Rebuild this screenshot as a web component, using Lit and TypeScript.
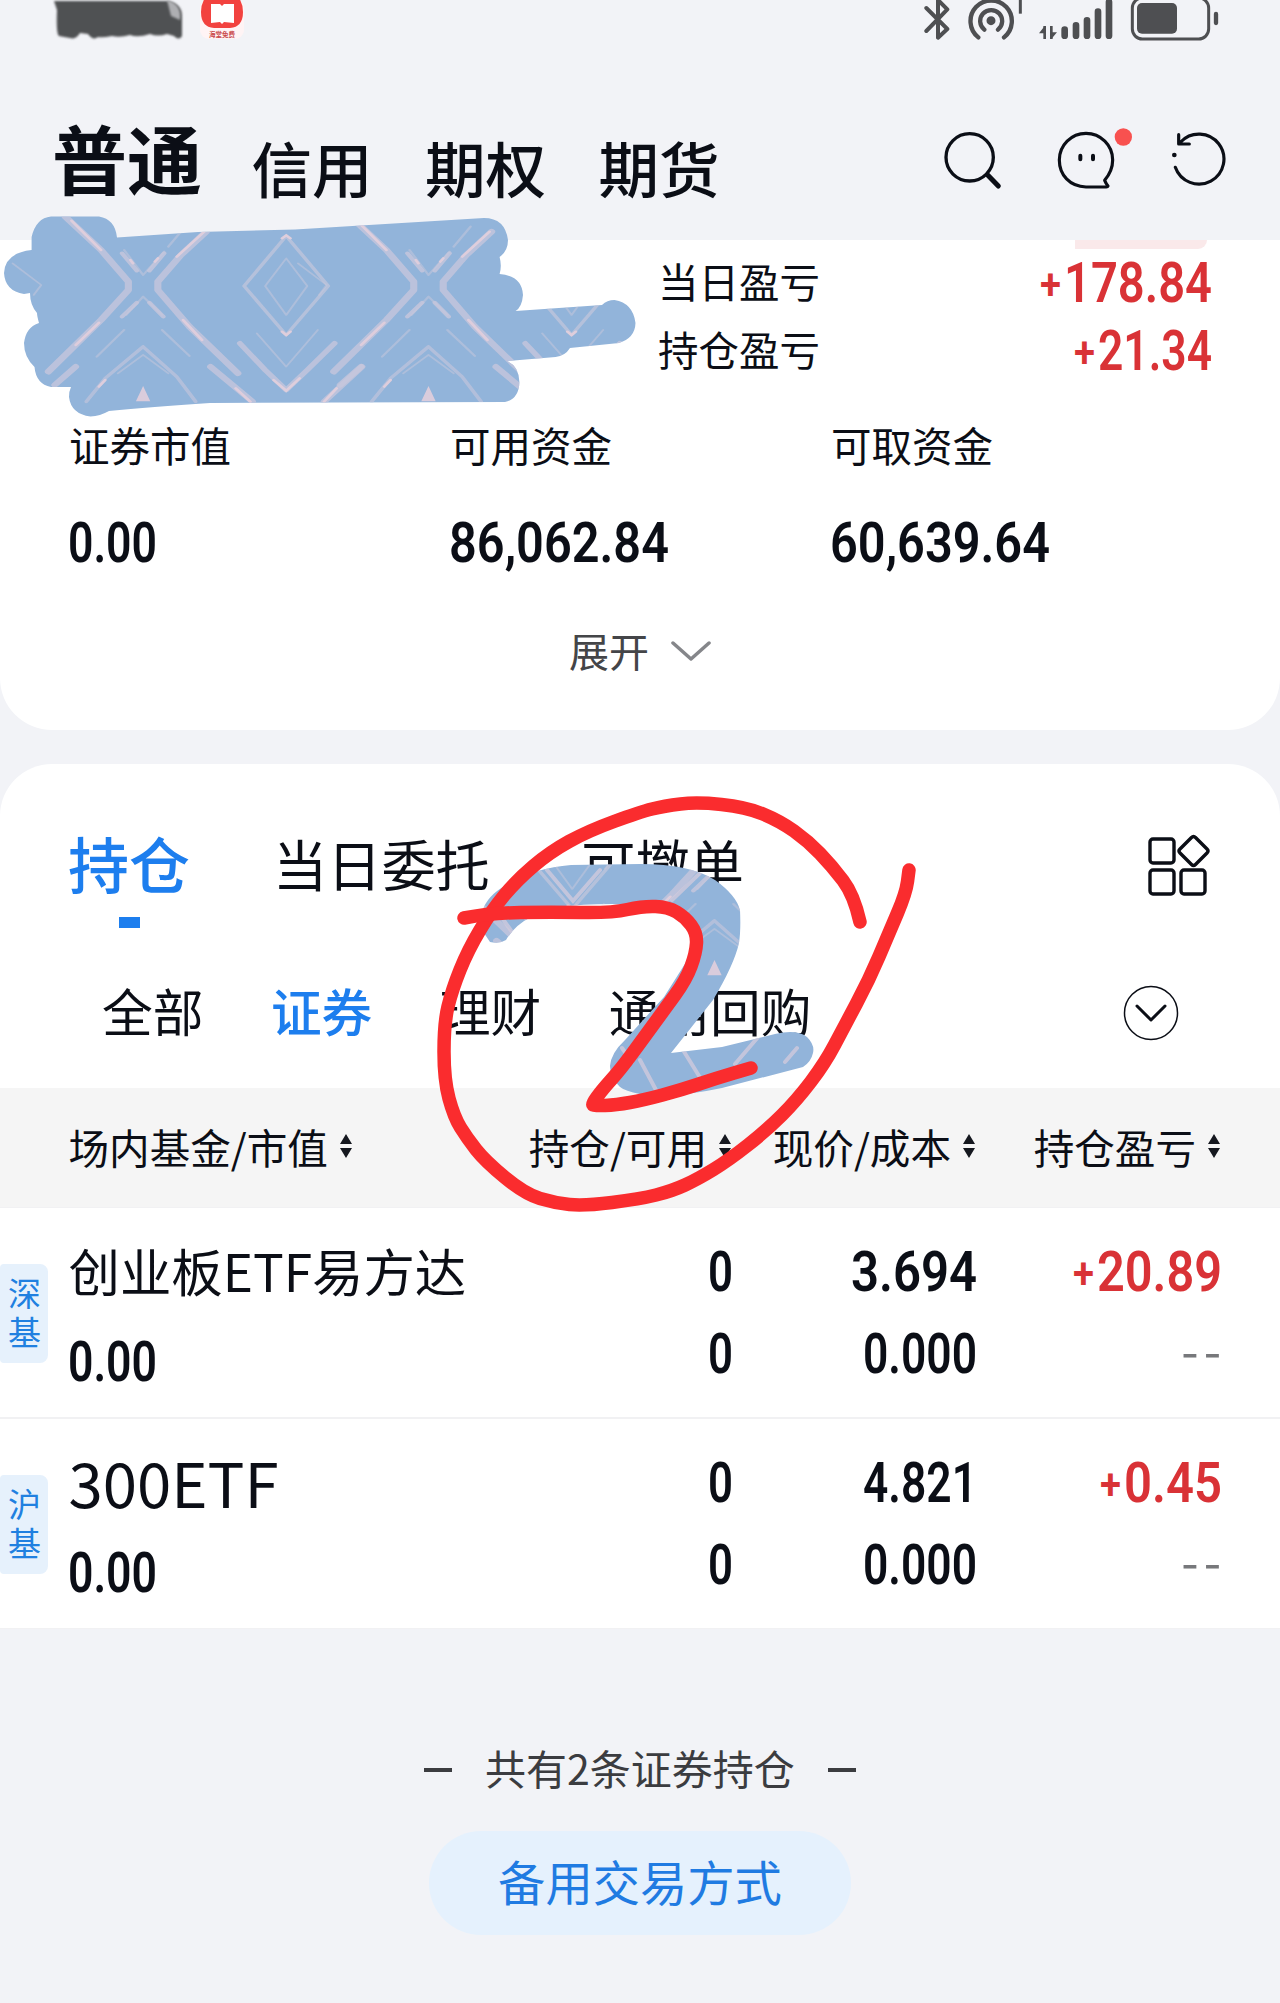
import { LitElement, html, css, svg } from "lit";
import { customElement, property } from "lit/decorators.js";

const sans = css`"Noto Sans CJK SC", "Noto Sans", sans-serif`;

/** A figure set in condensed numerals: `span` is its drawn width in pixels. */
@customElement("money-figure")
class MoneyFigure extends LitElement {
  @property() value = "";
  @property({ type: Number }) span = 0;

  static styles = css`
    :host { display: block; height: 40px; color: #0b0e16; }
    .figure { display: block; overflow: visible; }
    .digits { font: 600 56px Roboto, sans-serif; fill: currentColor; }
    .sign { font: 600 43px Roboto, sans-serif; fill: currentColor; }
  `;

  render() {
    const signed = this.value.startsWith("+");
    const digits = signed ? this.value.slice(1) : this.value;
    const start = signed ? 23 : -1;
    return html`<svg class="figure" width=${this.span} height="40">
      ${signed ? svg`<text class="sign" x="-1" y="37" textLength="21" lengthAdjust="spacingAndGlyphs">+</text>` : null}
      <text class="digits" x=${start} y="40" textLength=${this.span + 2 - start} lengthAdjust="spacingAndGlyphs">${digits}</text>
    </svg>`;
  }
}

interface Holding {
  market: string;
  name: string;
  large: boolean;
  price: [string, number];
  profit: [string, number];
}

const holdings: Holding[] = [
  { market: "深基", name: "创业板ETF易方达", large: false, price: ["3.694", 123], profit: ["+20.89", 146] },
  { market: "沪基", name: "300ETF", large: true, price: ["4.821", 111], profit: ["+0.45", 119] },
];

const funds: [string, string, number][] = [
  ["证券市值", "0.00", 86],
  ["可用资金", "86,062.84", 217],
  ["可取资金", "60,639.64", 217],
];

const sortMark = html`<svg class="sort" width="12" height="24" viewBox="0 0 12 24"><path d="M6 0 12 10H0zM6 24 0 14H12z" fill="#15181f" /></svg>`;

/* One repeat of the marbled brush pattern. */
const motif = svg`
  <g fill="none" stroke="#c8c7dc" stroke-linecap="round" stroke-linejoin="round">
    <path stroke-width="17" opacity=".75" d="M155 50 240 150 305 245V270L240 360 115 515M490 95 430 165 375 245V270L450 380 565 520"/>
    <path stroke-width="11" opacity=".8" d="M290 160 325 212M390 160 355 212M325 308 290 350M355 308 388 350"/>
    <path stroke-width="6" opacity=".5" d="M295 150 340 225 390 155M300 345 340 290 385 345M400 140 440 80M385 390 450 468M295 390 230 470"/>
    <path stroke-width="9" opacity=".6" d="M205 605 250 535 340 440M465 605 420 530 340 440"/>
    <path stroke-width="5" opacity=".5" d="M280 520 340 465 400 520M30 190 98 255 80 285"/>
    <path stroke-width="16" opacity=".75" d="M500 500 600 605M860 500 770 605M180 500 130 555"/>
    <path stroke-width="9" opacity=".65" d="M680 108 780 258 680 405 580 258z"/>
    <path stroke-width="5" opacity=".5" d="M680 175 730 258 680 345 630 258zM610 400 680 500 755 390"/>
    <path stroke-width="14" opacity=".75" d="M570 430 630 510 680 570 730 510 795 430"/>
  </g>
  <g fill="none" stroke="#e3cfdc" stroke-width="7" stroke-linecap="round" opacity=".9">
    <path d="M170 62 240 150M485 95 420 170M235 368 180 435M435 360 480 420M560 565 595 605M800 565 770 605M250 540 235 560M670 395 680 405 690 395M670 115 680 106 690 115M650 540 680 572 712 535M375 175 368 185M310 180 316 190"/>
    <path fill="#e3cfdc" d="M340 568 328 600H352z"/>
  </g>`;

type Point = [number, number];

/* Turns pen samples into a smooth stroke that bends through their midpoints. */
function penPath(points: Point[]): string {
  let d = `M${points[0][0]} ${points[0][1]}`;
  for (let i = 1; i < points.length - 1; i++) {
    const [x, y] = points[i];
    const [nx, ny] = points[i + 1];
    d += `Q${x} ${y} ${(x + nx) / 2} ${(y + ny) / 2}`;
  }
  const last = points[points.length - 1];
  return `${d}L${last[0]} ${last[1]}`;
}

const loop: Point[] = [
  [860, 922], [854, 895], [832, 866], [808, 841], [780, 821], [746, 807], [697, 802], [664, 806], [640, 812], [588, 831],
  [550, 852], [517, 880], [492, 910], [468, 950], [452, 990], [444, 1023], [444, 1080], [454, 1117], [467, 1138], [485, 1161],
  [525, 1194], [555, 1203], [584, 1206], [640, 1199], [672, 1191], [698, 1179], [729, 1160], [767, 1130], [797, 1100],
  [825, 1063], [844, 1027], [869, 980], [889, 933], [906, 893], [909, 870],
];

const two: Point[] = [
  [464, 918], [490, 913], [551, 912], [612, 913], [643, 906], [668, 907], [685, 917], [697, 933], [696, 953], [686, 980],
  [664, 1010], [640, 1043], [620, 1070], [602, 1090], [592, 1104], [594, 1106], [616, 1105], [644, 1100], [681, 1090],
  [717, 1078], [751, 1068],
];

@customElement("app-root")
class AppRoot extends LitElement {
  static styles = css`
    :host { display: block; font-family: ${sans}; color: #0b0e16; }
    .page { position: relative; width: 1280px; height: 2003px; overflow: hidden; background: #f2f3f7; white-space: nowrap; }
    .page svg { display: block; flex: none; }

    .status { display: flex; height: 46px; justify-content: space-between; padding: 0 53px 0 50px; }
    .status-left { display: flex; gap: 14px; }
    .nav { display: flex; height: 194px; box-sizing: border-box; align-items: flex-start; padding-left: 52px; font-weight: 500; }
    .nav-tab { font-size: 60.5px; line-height: 70px; margin: 86px 52.5px 0 0; }
    .nav-tab.on { font-size: 75px; line-height: 80px; margin: 71px 49.5px 0 0; font-weight: 700; }
    .nav-icons { display: flex; margin: 80px 53px 0 auto; }
    .nav-icons .chat { margin: -1px 34px 0 52px; }

    .card { background: #fff; }
    .assets { height: 490px; border-radius: 0 0 52px 52px; display: flex; flex-direction: column; }
    .tag { align-self: flex-end; width: 132px; height: 9px; margin-right: 73px; background: #fae9ea; border-radius: 0 0 28px 0; }
    .pnl { display: flex; justify-content: space-between; align-items: center; height: 64px; margin-bottom: 4px; padding: 0 70px 0 658px; font-size: 40.5px; line-height: 64px; }
    .pnl money-figure { margin-top: 2px; }
    .red { color: #d93236; }
    .funds { display: grid; grid-template-columns: repeat(3, 381px); padding-left: 69px; margin-top: 30px; }
    .fund { display: flex; flex-direction: column; gap: 47px; font-size: 40.5px; line-height: 60px; }
    .expand { display: flex; align-items: center; justify-content: center; gap: 22px; margin-top: 58px; font-size: 40px; line-height: 60px; color: #444548; }
    .expand svg { margin-top: 2px; }

    .positions { margin-top: 34px; border-radius: 52px 52px 0 0; padding-top: 58px; }
    .tabs { display: flex; align-items: center; height: 80px; padding: 0 69px 0 68px; font-size: 54.2px; }
    .tabs .tab { margin-right: 91.5px; }
    .tabs .tab.on { font-size: 61px; font-weight: 500; color: #1d7eee; margin-right: 83px; }
    .tabs .grid { margin: 6px 0 0 auto; }
    .marker { width: 21px; height: 11px; margin: 15px 0 0 119px; background: #1d7eee; }
    .filters { display: flex; align-items: center; gap: 67.5px; height: 70px; margin-top: 47px; padding: 0 101px 43px 102px; font-size: 50.7px; }
    .filters .on { font-weight: 500; color: #1d7eee; }
    .filters .more { margin: 6px 0 0 auto; }

    .row { display: grid; grid-template-columns: 68.500px 400.500px 262px 244px 245px; box-sizing: border-box; }
    .head { height: 119px; align-items: center; padding-bottom: 3px; background: #f5f5f5; font-size: 40.6px; }
    .head-cell { display: flex; align-items: center; justify-content: flex-end; gap: 12px; }
    .head-cell.first { grid-column: 2; justify-content: flex-start; }
    .head-cell .sort { margin-top: -1px; }
    .holding { height: 211px; border: solid #f1f1f3; border-width: 1px 0; background: #fff; }
    .market { box-sizing: border-box; width: 48px; height: 99px; margin-top: 56px; padding: 9px 7px 0 8px; border-radius: 4px 8px 8px 4px; background: #e6f1fc; color: #2080e0; font-size: 33px; line-height: 39px; white-space: normal; word-break: break-all; }
    .title { display: flex; flex-direction: column; gap: 31px; padding-top: 22px; }
    .name { font-size: 51.4px; line-height: 80px; }
    .name.large { font-size: 61.7px; }
    .pair { display: flex; flex-direction: column; align-items: flex-end; gap: 42px; padding-top: 43px; }
    .none { margin: 1px -6px 0 0; font-size: 50px; line-height: 28px; letter-spacing: 5px; color: #77787b; }

    .foot { display: flex; flex-direction: column; align-items: center; gap: 34px; padding-top: 108px; }
    .total { display: flex; align-items: center; gap: 33px; font-size: 41px; line-height: 60px; color: #3b3c40; }
    .dash { width: 28px; height: 4px; margin-top: 5px; background: #3b3c40; }
    .alt { width: 422px; height: 104px; border-radius: 52px; background: #e5f1fd; color: #1f7be2; font-size: 47.3px; line-height: 100px; text-align: center; }
    .ink { position: absolute; left: 0; top: 0; pointer-events: none; }
    .logo-word { font: 700 6.5px ${sans}; fill: #c9484a; }
  `;

  private statusBar() {
    return html`<div class="status">
      <div class="status-left">
        <svg width="136" height="44" viewBox="0 0 136 44">
          <defs><filter id="soften"><feGaussianBlur stdDeviation="1"/></filter></defs>
          <path filter="url(#soften)" fill="#505153" d="M4 1H118Q132 4 132 16V36Q129 41 124 36L117 34Q108 37 100 34Q88 38 80 35Q70 38 62 36Q52 38 48 37Q43 41 38 34L30 33Q26 40 20 38Q14 37 9 36Q6 34 7 10z"/>
          <path filter="url(#soften)" fill="#aeafb2" d="M117 0Q132 4 130 20L121 16z"/>
        </svg>
        <svg width="44" height="42" viewBox="0 0 44 42">
          <rect width="44" height="40" y="-1" rx="9" fill="#fff4f5"/>
          <path fill="#f2423f" d="M5-2H39Q43 4 43 12 43 27 30 28H14Q1 27 1 12 1 4 5-2z"/>
          <path fill="#fff" d="M11 4 20 4 22 6 24 4 34 4V23L24 22 22 24 20 22 11 23z"/>
          <text class="logo-word" x="9" y="37">海堂免费</text>
        </svg>
      </div>
      <svg width="307" height="43" viewBox="60 0 921 129">
        <g fill="none" stroke="#4e4f52" stroke-linecap="round" stroke-linejoin="round">
          <path stroke-width="12" d="M79 24 142 87 114 113V0L142 28 79 93"/>
          <circle cx="273" cy="62" r="7" stroke-width="13"/>
          <path stroke-width="13" d="M253 89A33 33 0 1 1 294 89M235 112A62 62 0 1 1 312 112"/>
          <path stroke-width="9" stroke-linecap="butt" d="M361 0V41"/>
          <path stroke-width="8" stroke-linecap="butt" d="M434 78V117M454 78V117"/>
          <path stroke-width="20" d="M494 89V107M528 76V107M561 61V107M594 35V107M627 6V107"/>
          <rect x="697" y="-6" width="229" height="123" rx="30" stroke-width="9"/>
          <path stroke-width="13" d="M948 42V69"/>
        </g>
        <path fill="#4e4f52" d="M417 100 434 78V100zM454 117V97H471z"/>
        <rect x="711" y="9" width="120" height="92" rx="15" fill="#4e4f52"/>
      </svg>
    </div>`;
  }

  private navigation() {
    return html`<div class="nav">
      <span class="nav-tab on">普通</span>
      <span class="nav-tab">信用</span>
      <span class="nav-tab">期权</span>
      <span class="nav-tab">期货</span>
      <div class="nav-icons">
        <svg width="60" height="64" viewBox="132 376 180 192" fill="none" stroke="#0b0e16" stroke-linecap="round">
          <circle cx="212" cy="470" r="71" stroke-width="10"/><path stroke-width="15" d="M266 523 298 556"/>
        </svg>
        <svg class="chat" width="80" height="64" viewBox="468 375 240 192" fill="none" stroke="#0b0e16" stroke-linecap="round" stroke-linejoin="round">
          <path stroke-width="9.500" d="M561 561C512 559 481 525 481 480A80 80 0 0 1 641 480C641 504 632 523 617 541Q621 551 627 558 626 561 622 561z"/>
          <path stroke-width="12" d="M544 467V478M582 467V478"/>
          <circle cx="673" cy="411" r="26" fill="#f8514f" stroke="none"/>
        </svg>
        <svg width="58" height="64" viewBox="810 376 174 192" fill="none" stroke="#0b0e16" stroke-linecap="round" stroke-linejoin="round">
          <path stroke-width="9.500" d="M829 500A75 75 0 1 0 845 424M839 402V430H871"/>
          <circle cx="826" cy="463" r="7" fill="#0b0e16" stroke="none"/>
        </svg>
      </div>
    </div>`;
  }

  private assets() {
    return html`<section class="card assets">
      <div class="tag"></div>
      <div class="pnl"><span>当日盈亏</span><money-figure class="red" value="+178.84" .span=${169}></money-figure></div>
      <div class="pnl"><span>持仓盈亏</span><money-figure class="red" value="+21.34" .span=${135}></money-figure></div>
      <div class="funds">
        ${funds.map(([label, value, span]) => html`<div class="fund"><span>${label}</span><money-figure .value=${value} .span=${span}></money-figure></div>`)}
      </div>
      <div class="expand"><span>展开</span>
        <svg width="40" height="22" viewBox="0 0 40 22" fill="none" stroke="#85868a" stroke-width="3.5" stroke-linecap="round" stroke-linejoin="round"><path d="M2 3 20 19 38 3"/></svg>
      </div>
    </section>`;
  }

  private positions() {
    return html`<section class="card positions">
      <div class="tabs">
        <span class="tab on">持仓</span><span class="tab">当日委托</span><span class="tab">可撤单</span>
        <svg class="grid" width="64" height="64" viewBox="0 0 64 64" fill="none" stroke="#0b0e16" stroke-width="3.4" stroke-linejoin="round">
          <rect x="3" y="6" width="24" height="24" rx="3"/><rect x="3" y="37" width="24" height="24" rx="3"/><rect x="34" y="37" width="24" height="24" rx="3"/>
          <path d="M44.500 4.500Q46.500 2.500 48.500 4.500L60 16Q62 18 60 20L48.500 31.500Q46.500 33.500 44.500 31.500L33 20Q31 18 33 16z"/>
        </svg>
      </div>
      <div class="marker"></div>
      <div class="filters">
        <span>全部</span><span class="on">证券</span><span>理财</span><span>通用回购</span>
        <svg class="more" width="56" height="56" viewBox="0 0 56 56" fill="none" stroke="#0b0e16" stroke-linecap="round" stroke-linejoin="round">
          <circle cx="28" cy="28" r="26.500" stroke-width="1.500"/><path stroke-width="3" d="M14 21 28 35 42 21"/>
        </svg>
      </div>
      <div class="row head">
        <span class="head-cell first">场内基金/市值${sortMark}</span>
        <span class="head-cell">持仓/可用${sortMark}</span>
        <span class="head-cell">现价/成本${sortMark}</span>
        <span class="head-cell">持仓盈亏${sortMark}</span>
      </div>
      ${holdings.map((h) => html`<div class="row holding">
        <div class="market">${h.market}</div>
        <div class="title">
          <span class=${h.large ? "name large" : "name"}>${h.name}</span>
          <money-figure value="0.00" .span=${86}></money-figure>
        </div>
        <div class="pair"><money-figure value="0" .span=${22}></money-figure><money-figure value="0" .span=${22}></money-figure></div>
        <div class="pair"><money-figure .value=${h.price[0]} .span=${h.price[1]}></money-figure><money-figure value="0.000" .span=${111}></money-figure></div>
        <div class="pair"><money-figure class="red" .value=${h.profit[0]} .span=${h.profit[1]}></money-figure><span class="none">--</span></div>
      </div>`)}
    </section>`;
  }

  private ink() {
    return html`<svg class="ink" width="1280" height="2003" viewBox="0 0 1280 2003">
      <defs>
        <clipPath id="smudge"><path d="M31.600 250V237Q36 218 51 216.500H99Q115 219 117 237.500L198 232 295 229.500 484 218Q505 218 508 240 508 251 499.600 257 502 266 499.600 274 522 276 523 295 522 307 515.600 311L602 305Q607 300 614.500 300 633 303 635.500 323 635 338 619 343L570 348Q565 356 555.600 357L507 361Q519 366 519.400 382 519 399 505 402L210 403Q150 407 109 411 100 416 90.500 416.500 71 414 69 397 69 391 71 387H51Q36 384 34.500 367 24 357 24 343 26 327 39 323 37 316 37 313 30 305 30 293L24 294Q5 291 4 273 5 253 31.600 250z"/></clipPath>
        <clipPath id="two"><path d="M482 930Q480 918 484 907 490 893 510 883 535 868 571 865L640 864Q690 864 715 880 736 895 740 910 741 930 739 943 734 965 713 1000L671 1053 722 1047 775 1034Q797 1029 807 1037 815 1045 813 1053 811 1062 803 1067L722 1088Q670 1099 640 1094 625 1091 620 1087 610 1078 610 1066 611 1053 625 1040L664 997 700 940 664 908 612 904Q550 904 531 917 515 925 506 940 500 944 490 942z"/></clipPath>
      </defs>
      <g clip-path="url(#smudge)">
        <rect x="0" y="200" width="660" height="230" fill="#92b4da"/>
        <g transform="translate(0 200) scale(.4209 .3333)">${motif}<g transform="translate(678 0)">${motif}</g></g>
      </g>
      <g clip-path="url(#two)">
        <rect x="470" y="850" width="360" height="260" fill="#92b4da"/>
        <g transform="translate(286 774) scale(.4209 .3333)">${motif}<g transform="translate(678 0)">${motif}</g></g>
        <path fill="none" stroke="#cfc9dc" stroke-width="4" stroke-linecap="round" opacity=".8" d="M547 870 573 901 600 870M700 873 672 900M759 1036 735 1064M797 1048 785 1062M683 1050 704 1084M640 1060 656 1090M498 912 512 932M622 1048 632 1062"/>
      </g>
      <g fill="none" stroke="#fa2c2e" stroke-width="13.500" stroke-linecap="round" stroke-linejoin="round">
        <path d=${penPath(loop)}/>
        <path d=${penPath(two)}/>
      </g>
    </svg>`;
  }

  render() {
    return html`<div class="page">
      ${this.statusBar()} ${this.navigation()} ${this.assets()} ${this.positions()}
      <div class="foot">
        <div class="total"><i class="dash"></i><span>共有2条证券持仓</span><i class="dash"></i></div>
        <div class="alt">备用交易方式</div>
      </div>
      ${this.ink()}
    </div>`;
  }
}
